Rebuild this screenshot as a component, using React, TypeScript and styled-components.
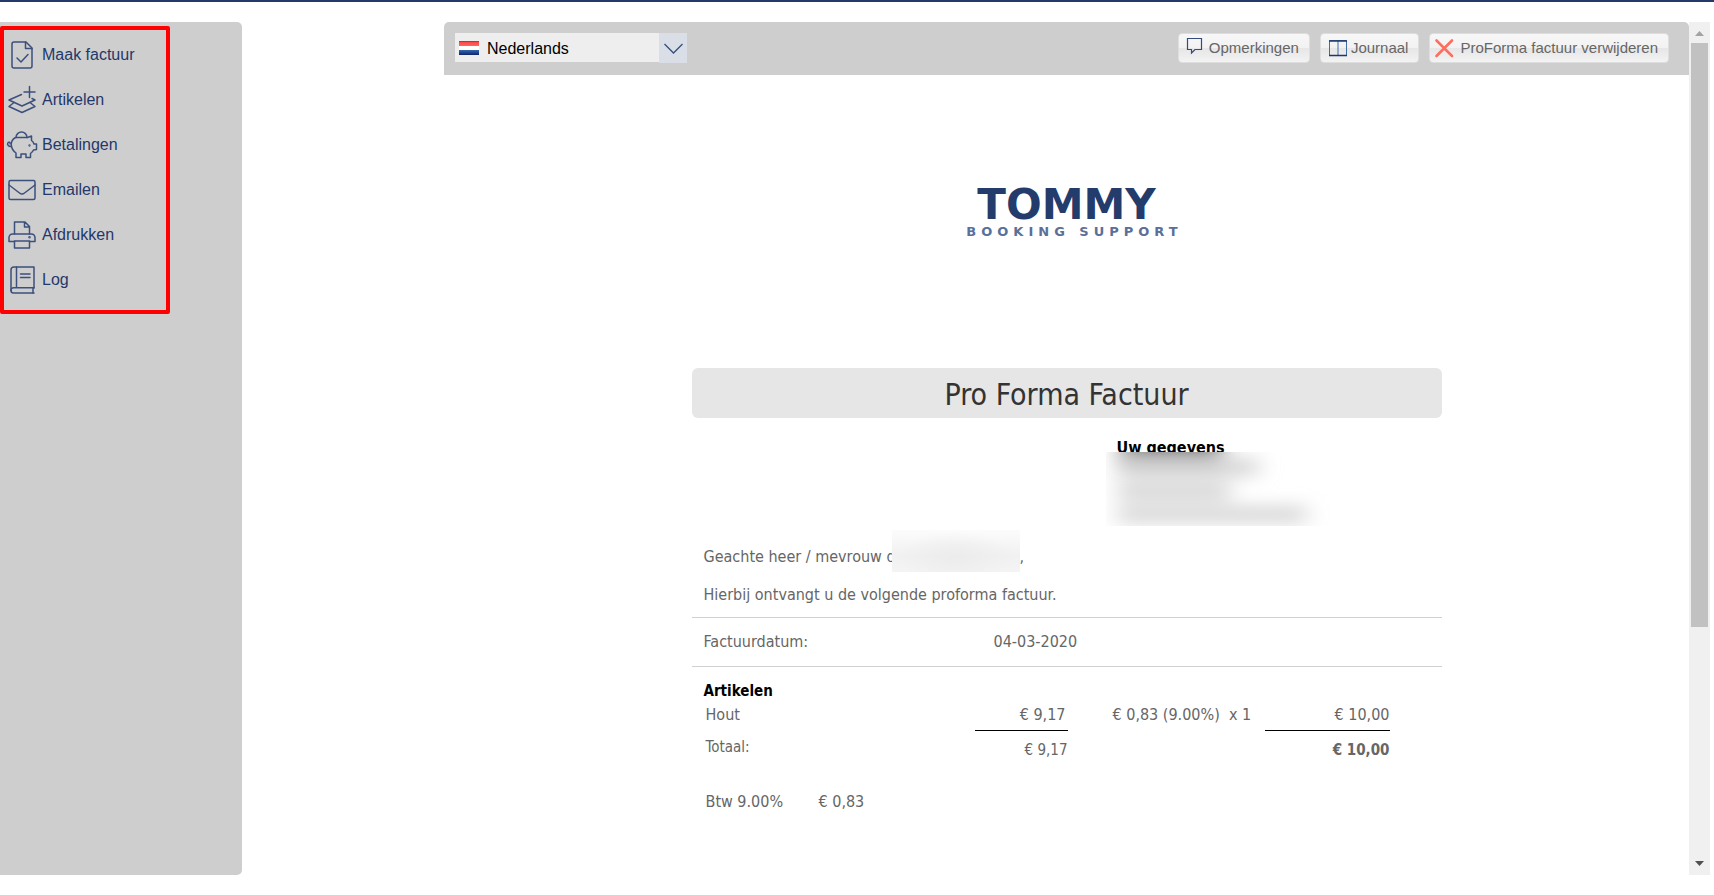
import React from "react";
import styled, { createGlobalStyle } from "styled-components";

const navy = "#23386b";
const docFont = '"DejaVu Sans Condensed", "DejaVu Sans", sans-serif';
const uiFont = '"Liberation Sans", Arial, sans-serif';

const GlobalStyle = createGlobalStyle`
  * { box-sizing: border-box; }
  body { margin: 0; background: #fff; font-family: ${uiFont}; font-size: 16px; }
`;

const Page = styled.div`
  display: flex;
  gap: 202px;
  min-height: 100vh;
  padding: 20px 4px 20px 0;
  border-top: 2px solid ${navy};
`;

/* ---------- sidebar ---------- */

const Sidebar = styled.aside`
  flex: 0 0 242px;
  padding-top: 4px;
  background: #cecece;
  border-radius: 0 5px 5px 0;
`;

const Menu = styled.nav`
  display: flex;
  flex-direction: column;
  width: 170px;
  padding: 2px 2px 8px;
  border: 4px solid #f00;
  border-radius: 2px;
`;

const MenuLink = styled.a`
  display: flex;
  align-items: center;
  gap: 4px;
  height: 45px;
  color: ${navy};
  text-decoration: none;
`;

const MenuIcon = styled.svg`
  flex: none;
  width: 32px;
  height: 32px;
  fill: none;
  stroke: #3c507d;
  stroke-width: 1.5;
  stroke-linejoin: round;
  stroke-linecap: round;
`;

/* ---------- viewer ---------- */

const Viewer = styled.main`
  display: flex;
  flex: 1;
  min-width: 0;
`;

const Content = styled.div`
  flex: 1;
  min-width: 0;
`;

const Toolbar = styled.header`
  display: flex;
  align-items: flex-start;
  justify-content: space-between;
  height: 53px;
  padding: 11px 20px 0 11px;
  background: #cecece;
  border-radius: 5px 5px 0 0;
`;

const LanguagePicker = styled.div`
  display: grid;
  grid-template-columns: 28px 176px 28px;
  align-items: center;
`;

const LanguageSelect = styled.select`
  grid-area: 1 / 1 / 2 / 4;
  align-self: start;
  height: 29px;
  margin: 0;
  padding: 1px 32px 0;
  border: 0;
  border-radius: 0;
  appearance: none;
  background: #eee;
  color: #000;
  font: 16px ${uiFont};
`;

const Flag = styled.svg`
  grid-area: 1 / 1;
  justify-self: end;
  width: 24px;
  height: 14px;
  pointer-events: none;
`;

const DropArrow = styled.svg`
  grid-area: 1 / 3;
  width: 28px;
  height: 30px;
  background: #d9dee7;
  pointer-events: none;
`;

const Actions = styled.div`
  display: flex;
  gap: 10px;
`;

const ActionButton = styled.button`
  display: flex;
  align-items: center;
  height: 30px;
  padding: 0 10px 1px 0;
  border: 1px solid #dedede;
  border-radius: 4px;
  background: linear-gradient(#f7f7f7, #f2f2f2 50%, #e6e6e6 50%, #f3f3f3);
  color: #666;
  font: 15px ${uiFont};
  white-space: nowrap;
`;

const ActionIcon = styled.svg`
  flex: none;
  width: 30px;
  height: 28px;
  fill: none;
`;

/* ---------- scroll bar ---------- */

const ScrollBar = styled.div`
  display: flex;
  flex: 0 0 21px;
  flex-direction: column;
  align-items: center;
  background: #f0f0f0;
`;

const ScrollArrow = styled.svg`
  width: 21px;
  height: 21px;
`;

const ScrollTrack = styled.div`
  flex: 1;
  width: 17px;
`;

const ScrollThumb = styled.div`
  height: 72%;
  background: #c1c1c1;
`;

/* ---------- invoice ---------- */

const Invoice = styled.article`
  max-width: 750px;
  margin: 0 auto;
  color: #666;
  font: 16px/20px ${docFont};
`;

const Logo = styled.div`
  display: flex;
  flex-direction: column;
  align-items: center;
  height: 293px;
  padding-top: 114px;
  font-family: "DejaVu Sans", sans-serif;
`;

const LogoName = styled.span`
  color: #243c6c;
  font-size: 42px;
  font-weight: 700;
  line-height: 32px;
`;

const LogoTagline = styled.span`
  margin-top: 4px;
  padding-left: 16px;
  color: #5a6f99;
  font-size: 13px;
  font-weight: 700;
  line-height: 14px;
  letter-spacing: 5px;
`;

const Title = styled.h1`
  margin: 0;
  padding-top: 4px;
  border-radius: 6px;
  background: #e6e6e6;
  color: #333;
  font-size: 30px;
  font-weight: 400;
  line-height: 46px;
  text-align: center;
`;

const Recipient = styled.section`
  width: 224px;
  margin: 20px 0 0 414px;
`;

const RecipientHeading = styled.h2`
  height: 14px;
  margin: 0;
  padding-left: 11px;
  color: #000;
  font-size: 16px;
  line-height: 20px;
`;

const AddressMask = styled.svg`
  display: block;
  position: relative;
  width: 224px;
  height: 74px;
  background: #fff;
`;

const Greeting = styled.p`
  display: flex;
  height: 42px;
  margin: 4px 0 0;
  padding-left: 12px;
`;

const GreetingText = styled.span`
  width: 188px;
  padding-top: 17px;
  white-space: nowrap;
`;

const GreetingEnd = styled.span`
  padding-top: 17px;
`;

const NameMask = styled.span`
  position: relative;
  width: 128px;
  background:
    radial-gradient(ellipse at 50% 65%, #ececec, rgba(240, 240, 240, 0) 65%),
    linear-gradient(#fcfcfc, #f1f1f1 60%, #f4f4f4);
`;

const Intro = styled.p`
  margin: 13px 0 12px;
  padding-left: 12px;
`;

const DateRow = styled.dl`
  display: flex;
  margin: 0;
  padding: 14px 12px;
  border: solid #d0d0d0;
  border-width: 1px 0;
`;

const DateLabel = styled.dt`
  width: 290px;
`;

const DateValue = styled.dd`
  margin: 0;
`;

const ItemsHeading = styled.h2`
  margin: 14px 0 0 12px;
  color: #000;
  font-size: 15px;
  line-height: 20px;
`;

const ItemTable = styled.table`
  width: 686px;
  margin-left: 12px;
  border-collapse: separate;
  border-spacing: 0;
  table-layout: fixed;
`;

const Col = styled.col<{ $width: number }>`
  width: ${(p) => p.$width}px;
`;

const Cell = styled.td<{ $right?: boolean; $line?: boolean }>`
  padding: 4px 2px 5px;
  border-bottom: 1px solid ${(p) => (p.$line ? "#000" : "transparent")};
  text-align: ${(p) => (p.$right ? "right" : "left")};
  white-space: pre;
`;

const AmountCell = styled(Cell)`
  padding-right: 0;
`;

const TaxCell = styled(Cell)`
  padding-left: 45px;
`;

const TotalLabel = styled.th`
  height: 29px;
  padding: 6px 2px 0;
  font-size: 15px;
  font-weight: 400;
  text-align: left;
  vertical-align: top;
`;

const TotalCell = styled.td<{ $strong?: boolean }>`
  padding: 6px 0 0;
  font-size: 15px;
  font-weight: ${(p) => (p.$strong ? 700 : 400)};
  text-align: right;
  vertical-align: bottom;
`;

const VatRow = styled.dl`
  display: flex;
  margin: 32px 0 0;
  padding-left: 14px;
`;

const VatLabel = styled.dt`
  width: 113px;
`;

const menuItems: { label: string; icon: React.ReactNode }[] = [
  {
    label: "Maak factuur",
    icon: (
      <>
        <path d="M8 3h12l6 6v18a2 2 0 0 1-2 2H8a2 2 0 0 1-2-2V5a2 2 0 0 1 2-2z" />
        <path d="M19.500 3v6.500H26M11 19l4 4 7-7.500" />
      </>
    ),
  },
  {
    label: "Artikelen",
    icon: (
      <>
        <path d="M23.500 2.500v11M18 8h11" />
        <path d="M15.500 10.500 3 16l13 6 13-6-3-1.500" />
        <path d="M8 18.500 3 22.500l13 6 13-6-5-4" />
      </>
    ),
  },
  {
    label: "Betalingen",
    icon: (
      <>
        <path d="M10 8.500a5.500 5.500 0 0 1 11 0" />
        <path d="M10 8.500h11.500l4-1.500v4.500c1.500 1 2 2 2.500 3.500h2.500v5.500L27.500 21c-.7 1.500-1.500 2.500-3 3.500v4h-4.500v-3.500h-5v3.500h-5v-4.500c-6-4.500-6.500-12-.5-15.500z" />
        <path d="M5.500 17.500C2.500 18 1 15.500 1.800 14c.8-1.500 3-.8 2.200.8" />
        <circle cx="23.500" cy="16.500" r=".4" />
      </>
    ),
  },
  {
    label: "Emailen",
    icon: (
      <>
        <rect x="3" y="6.500" width="26" height="19" rx="1.500" />
        <path d="m3 11 10.500 8q2.500 2 5 0L29 11" />
      </>
    ),
  },
  {
    label: "Afdrukken",
    icon: (
      <>
        <path d="M8.500 15V3H19l4.500 4.500V15M18.500 3v5h5" />
        <path d="M8.500 22.500H3V18.500a3.500 3.500 0 0 1 3.500-3.500h19a3.500 3.500 0 0 1 3.500 3.500v4h-5.500" />
        <path d="M8.500 22h15v7h-15z" />
        <circle cx="23.500" cy="18.200" r=".5" />
      </>
    ),
  },
  {
    label: "Log",
    icon: (
      <>
        <path d="M28 24V3H8a3 3 0 0 0-3 3v20.500A2.500 2.500 0 0 0 7.500 29H28" />
        <path d="M28 23.800H7.500A2.500 2.500 0 0 0 5 26.500M10.500 3v20.500M27 24v5M14.500 10h9.500M14.500 13.500h9.500" />
      </>
    ),
  },
];

const Smudge = () => (
  <AddressMask viewBox="0 0 224 74" aria-hidden="true">
    <defs>
      <filter id="soft" x="-50%" y="-200%" width="200%" height="500%">
        <feGaussianBlur stdDeviation="11" />
      </filter>
      <filter id="softer" x="-50%" y="-100%" width="200%" height="300%">
        <feGaussianBlur stdDeviation="11 9" />
      </filter>
    </defs>
    <rect x="16" y="-18" width="100" height="26" fill="#707070" filter="url(#soft)" />
    <g fill="#cacaca" filter="url(#softer)">
      <rect x="12" y="8" width="140" height="14" />
      <rect x="12" y="32" width="112" height="14" />
      <rect x="12" y="56" width="188" height="13" />
    </g>
  </AddressMask>
);

export default function App() {
  return (
    <>
      <GlobalStyle />
      <Page>
        <Sidebar>
          <Menu>
            {menuItems.map((item) => (
              <MenuLink href="#" key={item.label}>
                <MenuIcon viewBox="0 0 32 32" aria-hidden="true">
                  {item.icon}
                </MenuIcon>
                {item.label}
              </MenuLink>
            ))}
          </Menu>
        </Sidebar>

        <Viewer>
          <Content>
            <Toolbar>
              <LanguagePicker>
                <LanguageSelect aria-label="Taal" defaultValue="nl">
                  <option value="nl">Nederlands</option>
                </LanguageSelect>
                <Flag viewBox="0 0 24 14" aria-hidden="true">
                  <defs>
                    <linearGradient id="red" x1="0" y1="0" x2="0" y2="1">
                      <stop offset="0" stopColor="#f00" />
                      <stop offset=".3" stopColor="#ff4a4a" />
                      <stop offset="1" stopColor="#f66" />
                    </linearGradient>
                    <linearGradient id="blue" x1="0" y1="0" x2="0" y2="1">
                      <stop offset="0" stopColor="#3468ae" />
                      <stop offset="1" stopColor="#10246c" />
                    </linearGradient>
                  </defs>
                  <rect width="20" height="5" fill="url(#red)" />
                  <rect y="5" width="20" height="4" fill="#fff" />
                  <rect y="9" width="20" height="5" fill="url(#blue)" />
                </Flag>
                <DropArrow viewBox="0 0 28 30" aria-hidden="true">
                  <path d="m5.500 11 9 9 9-9" fill="none" stroke="#34507c" strokeWidth="1.300" />
                </DropArrow>
              </LanguagePicker>

              <Actions>
                <ActionButton type="button">
                  <ActionIcon viewBox="0 0 30 28" aria-hidden="true">
                    <path
                      d="M8.500 4.500h14v11H16l-3.500 3.500v-3.500h-4z"
                      stroke="#344b7c"
                      strokeWidth="1.200"
                    />
                  </ActionIcon>
                  Opmerkingen
                </ActionButton>
                <ActionButton type="button">
                  <ActionIcon viewBox="0 0 30 28" aria-hidden="true">
                    <path d="M8.500 6.500h17v15h-17zM17 6.500v15" stroke="#3f6ea5" />
                    <path d="M8 7h18M8 21.500h18" stroke="#1f3864" strokeWidth="1.600" />
                  </ActionIcon>
                  Journaal
                </ActionButton>
                <ActionButton type="button">
                  <ActionIcon viewBox="0 0 30 28" aria-hidden="true">
                    <path
                      d="m6.500 6.500 15.500 15.500M22 6.500 6.500 22"
                      stroke="#ff6d5e"
                      strokeWidth="2.600"
                      strokeLinecap="round"
                    />
                  </ActionIcon>
                  ProForma factuur verwijderen
                </ActionButton>
              </Actions>
            </Toolbar>

            <Invoice>
              <Logo>
                <LogoName>TOMMY</LogoName>
                <LogoTagline>BOOKING SUPPORT</LogoTagline>
              </Logo>
              <Title>Pro Forma Factuur</Title>

              <Recipient>
                <RecipientHeading>Uw gegevens</RecipientHeading>
                <Smudge />
              </Recipient>

              <Greeting>
                <GreetingText>Geachte heer / mevrouw d</GreetingText>
                <NameMask />
                <GreetingEnd>,</GreetingEnd>
              </Greeting>
              <Intro>Hierbij ontvangt u de volgende proforma factuur.</Intro>

              <DateRow>
                <DateLabel>Factuurdatum:</DateLabel>
                <DateValue>04-03-2020</DateValue>
              </DateRow>

              <ItemsHeading>Artikelen</ItemsHeading>
              <ItemTable>
                <colgroup>
                  <Col $width={271} />
                  <Col $width={93} />
                  <Col $width={197} />
                  <Col $width={125} />
                </colgroup>
                <tbody>
                  <tr>
                    <Cell>Hout</Cell>
                    <Cell $right $line>€ 9,17</Cell>
                    <TaxCell>{"€ 0,83 (9.00%)  x 1"}</TaxCell>
                    <AmountCell $right $line>€ 10,00</AmountCell>
                  </tr>
                  <tr>
                    <TotalLabel scope="row">Totaal:</TotalLabel>
                    <TotalCell>€ 9,17</TotalCell>
                    <TotalCell />
                    <TotalCell $strong>€ 10,00</TotalCell>
                  </tr>
                </tbody>
              </ItemTable>

              <VatRow>
                <VatLabel>Btw 9.00%</VatLabel>
                <DateValue>€ 0,83</DateValue>
              </VatRow>
            </Invoice>
          </Content>

          <ScrollBar aria-hidden="true">
            <ScrollArrow viewBox="0 0 21 21">
              <path d="m6 14 4.500-5 4.500 5z" fill="#a3a3a3" />
            </ScrollArrow>
            <ScrollTrack>
              <ScrollThumb />
            </ScrollTrack>
            <ScrollArrow viewBox="0 0 21 21">
              <path d="m6 7 4.500 5L15 7z" fill="#505050" />
            </ScrollArrow>
          </ScrollBar>
        </Viewer>
      </Page>
    </>
  );
}
